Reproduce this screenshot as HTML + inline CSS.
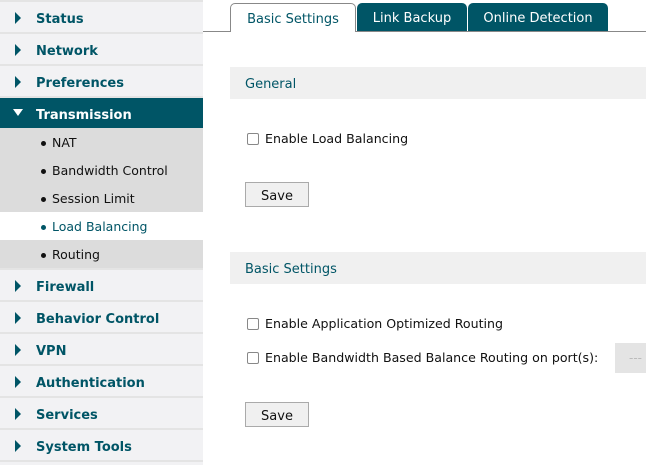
<!DOCTYPE html>
<html><head><meta charset="utf-8"><style>
*{margin:0;padding:0;box-sizing:border-box}
html,body{width:646px;height:465px;overflow:hidden}
body{background:#fff;font-family:"DejaVu Sans","Liberation Sans",sans-serif;font-size:12.5px;position:relative;color:#222}
.side{position:absolute;left:0;top:0;width:203px;height:465px;background:#e4e4e4;overflow:hidden}
.it{position:absolute;left:0;width:203px;height:30px;background:#f2f2f4;color:#005566;font-weight:bold;font-size:13px;line-height:30px;padding-top:3px;padding-left:36px}
.it:before{content:"";position:absolute;left:15px;top:10px;border-left:6px solid #005566;border-top:6px solid transparent;border-bottom:6px solid transparent}
.it.on{background:#005566;color:#fff}
.it.on:before{left:13px;top:11px;border-top:7px solid #fff;border-left:5px solid transparent;border-right:5px solid transparent;border-bottom:0}
.sub{position:absolute;left:0;width:203px;height:28px;background:#dcdcdc;line-height:28px;padding-top:1px;padding-left:52px;color:#111;font-size:12.5px}
.sub:before{content:"";position:absolute;left:41px;top:13px;width:5px;height:5px;border-radius:50%;background:#111}
.sub.sel{background:#fff;color:#005566}
.sub.sel:before{background:#005566}
.tab{position:absolute;top:3px;height:28px;border-radius:5px 5px 0 0;line-height:28px;padding-top:2px;text-align:center;font-size:13px;color:#fff;background:#005566}
.tab.a{background:#fff;color:#005566;border:1px solid #888;border-bottom:none}
.line{position:absolute;left:203px;top:31px;width:443px;height:1px;background:#888}
.hdr{position:absolute;left:230px;width:416px;height:32px;background:#f0f0f0;color:#005566;line-height:32px;padding-top:2px;padding-left:15px;font-size:13px}
.cb{position:absolute;left:247px;width:12px;height:12px;border:1px solid #888;border-radius:2px;background:#fff}
.lbl{position:absolute;left:265px;font-size:12.6px;color:#111}
.btn{position:absolute;left:245px;width:64px;height:25px;border:1px solid #aaa;background:#f0f0f0;text-align:center;line-height:23px;padding-top:2px;font-size:13px;color:#111}
</style></head><body>
<div class="side">
<div class="it" style="top:2px">Status</div>
<div class="it" style="top:34px">Network</div>
<div class="it" style="top:66px">Preferences</div>
<div class="it on" style="top:98px">Transmission</div>
<div class="sub" style="top:128px">NAT</div>
<div class="sub" style="top:156px">Bandwidth Control</div>
<div class="sub" style="top:184px">Session Limit</div>
<div class="sub sel" style="top:212px">Load Balancing</div>
<div class="sub" style="top:240px">Routing</div>
<div class="it" style="top:270px">Firewall</div>
<div class="it" style="top:302px">Behavior Control</div>
<div class="it" style="top:334px">VPN</div>
<div class="it" style="top:366px">Authentication</div>
<div class="it" style="top:398px">Services</div>
<div class="it" style="top:430px">System Tools</div>
<div style="position:absolute;left:0;top:462px;width:203px;height:3px;background:#f2f2f4"></div>
</div>
<div class="line"></div>
<div class="tab a" style="left:230px;width:126px;height:29px">Basic Settings</div>
<div class="tab" style="left:357px;width:110px">Link Backup</div>
<div class="tab" style="left:468px;width:140px">Online Detection</div>
<div class="hdr" style="top:67px">General</div>
<div class="cb" style="top:133px"></div><div class="lbl" style="top:131px">Enable Load Balancing</div>
<div class="btn" style="top:182px">Save</div>
<div class="hdr" style="top:252px">Basic Settings</div>
<div class="cb" style="top:318px"></div><div class="lbl" style="top:316px">Enable Application Optimized Routing</div>
<div class="cb" style="top:352px"></div><div class="lbl" style="top:350px">Enable Bandwidth Based Balance Routing on port(s):</div>
<div style="position:absolute;left:615px;top:343px;width:31px;height:30px;background:#e4e4e4;color:#bbb;line-height:30px;padding-left:14px;font-size:12px">---</div>
<div class="btn" style="top:402px">Save</div>
</body></html>
